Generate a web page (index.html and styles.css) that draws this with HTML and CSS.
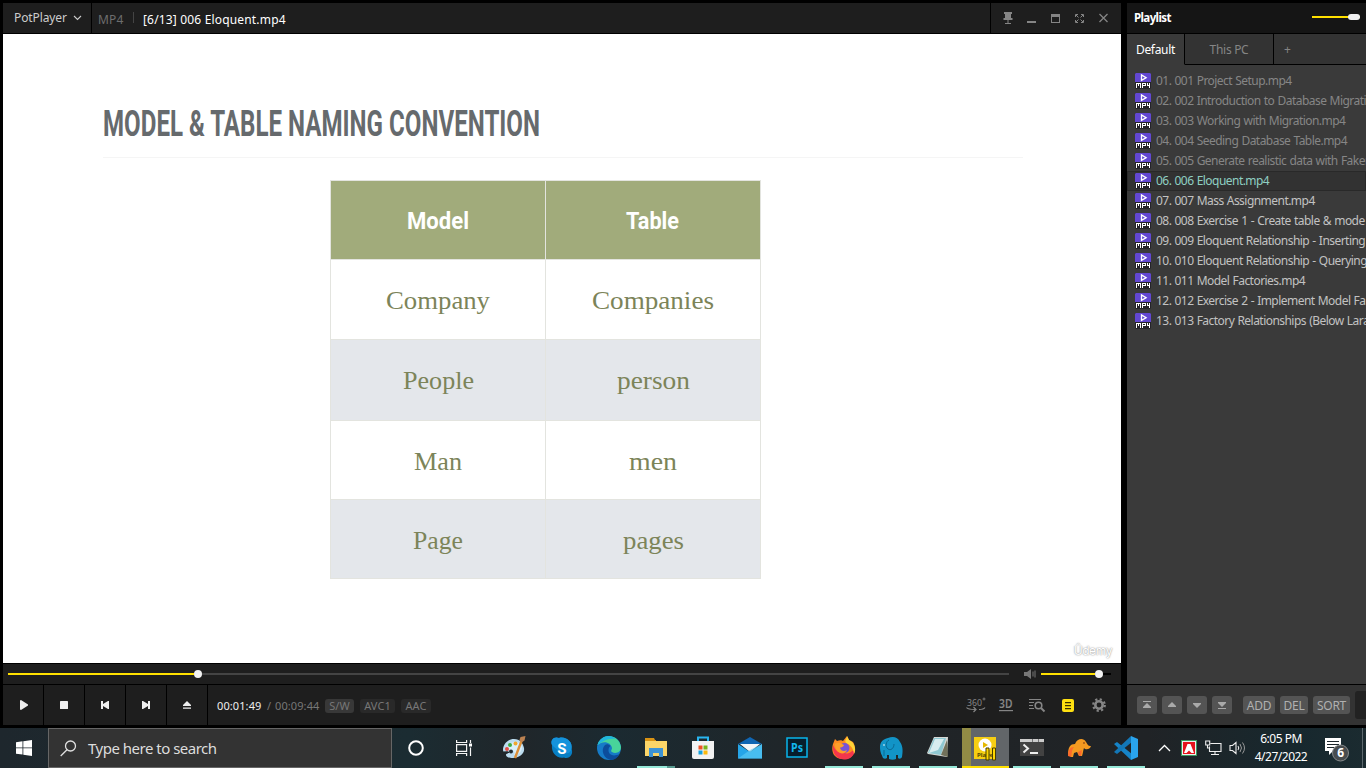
FILE: index.html
```html
<!DOCTYPE html>
<html lang="en">
<head>
<meta charset="utf-8">
<title>PotPlayer</title>
<link rel="stylesheet" href="styles.css">
</head>
<body>
<svg class="defs" width="0" height="0">
  <symbol id="mp4" viewBox="0 0 16 16">
    <path fill="#6247d2" d="M1 0h14l1 1v8H0V1z"/>
    <path fill="#242329" d="M0 9h16v6l-1 1H1l-1-1z"/>
    <path fill="none" stroke="#fff" stroke-width="1.3" d="M6.500 2v5.400l4.600-2.700z"/>
    <path fill="#fff" d="M1 10h4v1H1zM1 10h1v5H1zM3 10h1v3H3zM5 10h1v5H5zM7 10h3v1H7zM7 10h1v5H7zM10 10h1v3h-1zM8 12h2v1H8zM12 10h1v3h-1zM12 12h3v1h-3zM14 10h1v5h-1z"/>
  </symbol>
</svg>
<div class="workspace">
  <main class="player">
    <header class="titlebar">
      <div class="brand"><span>PotPlayer</span><svg width="9" height="6" viewBox="0 0 9 6"><path d="M1 1l3.500 3.500L8 1" fill="none" stroke="#ccc" stroke-width="1.100"/></svg></div>
      <div class="caption"><span class="fmt">MP4</span><i></i><span class="file">[6/13] 006 Eloquent.mp4</span></div>
      <div class="winbtns">
        <svg width="10" height="12" viewBox="0 0 10 12"><path fill="#858585" d="M1 0h8v2H8v4h1.500v2H.5V6H2V2H1zM4.500 8h1v3h-1zM2 11h6v1H2z"/></svg>
        <svg width="10" height="12" viewBox="0 0 10 12"><path fill="#858585" d="M0 9h9v2H0z"/></svg>
        <svg width="10" height="12" viewBox="0 0 10 12"><path fill="#858585" fill-rule="evenodd" d="M0 2h9v9H0zM1 5v5h7V5z"/></svg>
        <svg width="10" height="12" viewBox="0 0 10 12"><path fill="none" stroke="#858585" d="M.5 5V2.500H3M6 2.500h2.500V5M8.500 8v2.500H6M3 10.500H.5V8M1 3l2.500 2.500M8 3L5.500 5.500M8 10L5.500 7.500M1 10l2.500-2.500"/></svg>
        <svg width="10" height="12" viewBox="0 0 10 12"><path fill="none" stroke="#858585" stroke-width="1.300" d="M.5 2l8 8M8.500 2l-8 8"/></svg>
      </div>
    </header>
    <section class="slide">
      <svg class="heading" width="920" height="56"><text x="0" y="34" textLength="437" lengthAdjust="spacingAndGlyphs">MODEL &amp; TABLE NAMING CONVENTION</text></svg>
      <div class="grid">
        <div class="th"><svg width="214" height="78"><text x="76" y="48" textLength="62" lengthAdjust="spacingAndGlyphs">Model</text></svg></div>
        <div class="th"><svg width="214" height="78"><text x="80" y="48" textLength="53" lengthAdjust="spacingAndGlyphs">Table</text></svg></div>
        <div><svg width="214" height="78"><text x="55" y="49" textLength="104" lengthAdjust="spacingAndGlyphs">Company</text></svg></div>
        <div><svg width="214" height="78"><text x="46" y="49" textLength="122" lengthAdjust="spacingAndGlyphs">Companies</text></svg></div>
        <div class="alt"><svg width="214" height="78"><text x="72" y="49" textLength="71" lengthAdjust="spacingAndGlyphs">People</text></svg></div>
        <div class="alt"><svg width="214" height="78"><text x="71" y="49" textLength="73" lengthAdjust="spacingAndGlyphs">person</text></svg></div>
        <div><svg width="214" height="78"><text x="83" y="49" textLength="48" lengthAdjust="spacingAndGlyphs">Man</text></svg></div>
        <div><svg width="214" height="78"><text x="83" y="49" textLength="48" lengthAdjust="spacingAndGlyphs">men</text></svg></div>
        <div class="alt"><svg width="214" height="78"><text x="82" y="49" textLength="50" lengthAdjust="spacingAndGlyphs">Page</text></svg></div>
        <div class="alt"><svg width="214" height="78"><text x="77" y="49" textLength="61" lengthAdjust="spacingAndGlyphs">pages</text></svg></div>
      </div>
      <span class="mark">Ûdemy</span>
    </section>
    <div class="seek">
      <div class="track"><div class="done"></div><b></b></div>
      <svg width="12" height="10" viewBox="0 0 12 10"><path fill="#777" d="M0 3h3l4-3v10L3 7H0zM8.500 2.500h1v5h-1zM10.500 1.500h1v7h-1z"/></svg>
      <div class="vol"><div></div><b></b></div>
    </div>
    <div class="controls">
      <button><svg class="play" width="10" height="12" viewBox="0 0 10 12"><path fill="#eee" d="M1 1.500L2 1l7 4.500v1L2 11l-1-.5z"/></svg></button>
      <button><svg width="10" height="12" viewBox="0 0 10 12"><rect x="1" y="2" width="8" height="8" rx=".6" fill="#eee"/></svg></button>
      <button><svg width="10" height="12" viewBox="0 0 10 12"><path fill="#eee" d="M1 2h2v3l5-3h1v8H8L3 7v3H1z"/></svg></button>
      <button><svg width="10" height="12" viewBox="0 0 10 12"><path fill="#eee" d="M9 2H7v3L2 2H1v8h1l5-3v3h2z"/></svg></button>
      <button><svg width="10" height="12" viewBox="0 0 10 12"><path fill="#eee" d="M5 2l4 4v1H1V6zM1 8.500h8v1.200H1z"/></svg></button>
      <div class="time"><span class="now">00:01:49</span><span class="sl">/</span><span class="total">00:09:44</span><em class="on">S/W</em><em class="c2">AVC1</em><em class="c3">AAC</em></div>
      <div class="tools">
        <svg width="20" height="16" viewBox="0 0 20 16"><text class="t360" x="1" y="8.500" textLength="15" lengthAdjust="spacingAndGlyphs">360</text><circle cx="18" cy="2" r="1" fill="none" stroke="#858585" stroke-width=".8"/><path fill="none" stroke="#858585" stroke-width="1.200" d="M.5 10.500c1 1.500 3 2 8.500 2M7.500 10l2.500 2.500L7.500 15M19 10.500c-1 1.500-3 2-6 2"/></svg>
        <svg width="14" height="16" viewBox="0 0 14 16"><text class="t3d" x="0" y="11" textLength="13.500" lengthAdjust="spacingAndGlyphs">3D</text><path fill="#858585" d="M0 13h14v1.200H0z"/></svg>
        <svg width="16" height="16" viewBox="0 0 16 16"><path fill="none" stroke="#858585" stroke-width="1.200" d="M0 2.500h12M0 5.500h5M0 8.500h4M0 11.500h5"/><circle cx="9.500" cy="8.500" r="3.300" fill="none" stroke="#858585" stroke-width="1.600"/><path stroke="#858585" stroke-width="2" d="M12 11l3.500 3.500"/></svg>
        <svg width="12" height="16" viewBox="0 0 12 16"><rect y="2" width="12" height="13" rx="2" fill="#ffe011"/><path fill="#3a3200" d="M3 5h6v1.200H3zM3 8h6v1.200H3zM3 11h6v1.200H3z"/></svg>
        <svg width="14" height="16" viewBox="0 0 14 16"><circle cx="7" cy="8" r="3.700" fill="none" stroke="#858585" stroke-width="2.600"/><circle cx="7" cy="8" r="5.800" fill="none" stroke="#858585" stroke-width="2.200" stroke-dasharray="2.200 2.355"/></svg>
      </div>
    </div>
  </main>
  <aside class="playlist">
    <header class="plhead"><span>Playlist</span><div class="opacity"><b></b></div></header>
    <nav class="tabs"><span class="active">Default</span><span class="pc">This PC</span><span class="add">+</span></nav>
    <ul>
      <li class="seen"><svg><use href="#mp4"/></svg>01. 001 Project Setup.mp4</li>
      <li class="seen"><svg><use href="#mp4"/></svg>02. 002 Introduction to Database Migrati</li>
      <li class="seen"><svg><use href="#mp4"/></svg>03. 003 Working with Migration.mp4</li>
      <li class="seen"><svg><use href="#mp4"/></svg>04. 004 Seeding Database Table.mp4</li>
      <li class="seen"><svg><use href="#mp4"/></svg>05. 005 Generate realistic data with Faker</li>
      <li class="current"><svg><use href="#mp4"/></svg>06. 006 Eloquent.mp4</li>
      <li><svg><use href="#mp4"/></svg>07. 007 Mass Assignment.mp4</li>
      <li><svg><use href="#mp4"/></svg>08. 008 Exercise 1 - Create table &amp; mode</li>
      <li><svg><use href="#mp4"/></svg>09. 009 Eloquent Relationship - Inserting</li>
      <li><svg><use href="#mp4"/></svg>10. 010 Eloquent Relationship - Querying</li>
      <li><svg><use href="#mp4"/></svg>11. 011 Model Factories.mp4</li>
      <li><svg><use href="#mp4"/></svg>12. 012 Exercise 2 - Implement Model Fa</li>
      <li><svg><use href="#mp4"/></svg>13. 013 Factory Relationships (Below Lara</li>
    </ul>
    <footer class="plfoot">
      <span class="ib"><svg width="8" height="8" viewBox="0 0 8 8"><path fill="#aaa" d="M0 0h8v1H0zM4 2l4 4v1H0V6z"/></svg></span>
      <span class="ib"><svg width="8" height="8" viewBox="0 0 8 8"><path fill="#aaa" d="M4 1l4 4v1H0V5z"/></svg></span>
      <span class="ib"><svg width="8" height="8" viewBox="0 0 8 8"><path fill="#aaa" d="M4 7l4-4V2H0v1z"/></svg></span>
      <span class="ib last"><svg width="8" height="8" viewBox="0 0 8 8"><path fill="#aaa" d="M0 7h8v1H0zM4 6l4-4V1H0v1z"/></svg></span>
      <span class="tb w32">ADD</span><span class="tb w28">DEL</span><span class="tb w37">SORT</span><span class="find"></span>
    </footer>
  </aside>
</div>
<footer class="taskbar">
  <div class="start"><svg width="16" height="16" viewBox="0 0 16 16"><path fill="#fff" d="M0 2.200L6.500 1.300v6.200H0zM7.300 1.200L16 0v7.500H7.300zM0 8.300h6.500v6.300L0 13.700zM7.300 8.300H16V16l-8.700-1.200z"/></svg></div>
  <div class="search"><svg width="17" height="17" viewBox="0 0 17 17"><circle cx="10.500" cy="6" r="5" fill="none" stroke="#e0e0e0" stroke-width="1.300"/><path stroke="#e0e0e0" stroke-width="1.300" d="M7 9.700L.7 16"/></svg><span>Type here to search</span></div>
  <div class="apps">
    <div class="wide"><svg width="16" height="16"><circle cx="8" cy="8" r="6.800" fill="none" stroke="#fff" stroke-width="2"/></svg></div>
    <div class="wide view"><svg width="17" height="16" viewBox="0 0 17 16"><path fill="none" stroke="#f4f4f4" stroke-width="1.200" d="M.6 0v2.500h10V0M.6 16v-2.500h10V16M.6 4.600h10v6.800H.6zM14.500 0v3M14.500 7.500V16"/><path fill="#fff" d="M13 3.500h3v3h-3z"/></svg></div>
    <div><svg class="paint" width="24" height="24" viewBox="0 0 24 24"><path fill="#bcdcef" d="M22 12c1 6-5 10-11 10-4 0-7-1-7-3s4-1 3-3-6 1-6-2C1 8 6 3 12 3c6 0 9 4 10 9z"/><path fill="#d9effa" d="M20 11c0 5-4 8-8 8 2-4-2-5-5-5-2 0-3-1-1-4 3-5 12-6 14 1z"/><circle cx="5" cy="13" r="2" fill="#e44b43"/><circle cx="8" cy="9" r="2" fill="#3daa43"/><circle cx="13.500" cy="7.500" r="2" fill="#f0a72d"/><circle cx="9" cy="15.500" r="2" fill="#222b30"/><path fill="none" stroke="#dc8f38" stroke-width="2.400" d="M13 22l6.500-17"/><path fill="#bc8252" d="M17.500 4l1-3 5-1-1 4.500-3 2z"/></svg></div>
    <div><svg width="24" height="24" viewBox="0 0 24 24"><path fill="#087fc4" d="M2 9C0 4 4 0 9 2c7-2 14 4 12.500 11C24 18 19 24 14 21.500 7 23 1 17 2 9z"/><path fill="#1593dc" d="M2 9C0 4 4 0 9 2c7-2 14 4 12.500 11C20 20 11 18 2 9z"/><text class="skype" x="7.300" y="17.500">S</text></svg></div>
    <div><svg width="26" height="26" viewBox="0 0 26 26"><circle cx="13" cy="13" r="12" fill="#167bc7"/><path fill="#48d49a" d="M1.500 10C5-2 23-2 25 12c0 6-6 7-9 5-2-1 0-2 0-4C15 7 7 5 1.500 10z"/><path fill="#20b7dc" d="M1.500 10C5 0 14-1 20 4 10 3 7 7 1.500 10z"/><path fill="#0c4d9b" d="M9 10c-5 5-1 14 6 15 4 0 7-3 8.500-6-6 3-11 1-11-4 0-3 2-4 2-4-2-2-4-2-5.500-1z"/></svg></div>
    <div class="run group"><svg width="22" height="22" viewBox="0 0 22 22"><path fill="#d99314" d="M0 1h9l1 2h1v2H0z"/><path fill="#fbd568" d="M0 4h22v15H0z"/><path fill="#3d93d4" d="M4 11h14v9h-4v-4H8v4H4z"/></svg></div>
    <div><svg width="24" height="24" viewBox="0 0 24 24"><path fill="none" stroke="#29b5f0" stroke-width="2" d="M7 6V1.500h10V6"/><path fill="#f2f2f2" d="M1 5h22v16q0 2-2 2H3q-2 0-2-2z"/><path fill="#ef5125" d="M7.500 9.500h4v4h-4z"/><path fill="#78b51d" d="M12.500 9.500h4v4h-4z"/><path fill="#14a2df" d="M7.500 14.500h4v4h-4z"/><path fill="#fbb90c" d="M12.500 14.500h4v4h-4z"/></svg></div>
    <div><svg width="24" height="24" viewBox="0 0 24 24"><path fill="#1066b3" d="M0 8l12-7 12 7z"/><path fill="#f2f6f8" d="M2 8h20l-10 8z"/><path fill="#25a5e8" d="M0 8l12 8 12-8v14.500H0z"/><path fill="#5bcaf5" d="M0 22.500l12-8.500 12-6v14.500z" opacity=".65"/></svg></div>
    <div><svg width="22" height="22" viewBox="0 0 22 22"><path fill="#071e2c" stroke="#08b5eb" stroke-width="1.500" d="M1 1h20v19H1z"/><text class="ps" x="5" y="15" textLength="12" lengthAdjust="spacingAndGlyphs">Ps</text></svg></div>
    <div class="run"><svg width="24" height="24" viewBox="0 0 24 24"><path fill="#ff8b20" d="M1 8l2-5 2 2c2-1 5-1 6 0l4-5 2 4 4 2c4 6 2 17-9 17S-1 15 1 8z"/><path fill="#f4364c" d="M1 9c3 7 7 9 11 7 5 5 9-4 11-1-2 7-7 8.500-11 8.500C4 23 0 17 1 9z"/><path fill="#ffd337" d="M15 0l2 4c5 2 8 9 5 14-1-7-4-9-8-11-2-3 1-4 1-7z"/><circle cx="12.500" cy="12" r="5" fill="#7853d7"/><path fill="#ff9f29" d="M3 8c4-3 7 0 9 1-1 3-4 2-4 3 1 3 4 4 7 2-2 6-12 4-12-6z"/></svg></div>
    <div class="run"><svg width="24" height="24" viewBox="0 0 24 24"><path fill="#1294c7" d="M1 11C1 6 4 3 9 2c5-2 10-1 12 4 3 4 3 9 2 15-1 2-3 2-4 1v-3h-2v4c-2 1-5 1-7 0v-4H8v3c-1 1-3 1-4 0-1-3-3-5-3-11z"/><path fill="none" stroke="#075e87" stroke-width=".8" d="M10 4c-3 1-4 7-1 9s6-1 6-5M5 14v6"/><circle cx="5" cy="9" r=".8" fill="#fff"/></svg></div>
    <div class="run"><svg width="24" height="24" viewBox="0 0 24 24"><path fill="#d5d8d5" d="M8 1h14l-1 20-19-3-1-1z"/><path fill="#8fc8d2" d="M8 2h12l-5 17-13-2z"/><path fill="#d7ecef" d="M9 3h9l-6 11-9 3z"/><path fill="#71715b" d="M15 19l6-15 1 17z"/></svg></div>
    <div class="pot"><svg width="24" height="26" viewBox="0 0 24 26"><path fill="#f6ce13" d="M1 2h22v22H1z"/><circle cx="12" cy="10" r="6.500" fill="#fff"/><path fill="#e5b900" d="M10 7l5 3-5 3z"/><text class="pottext" x="4" y="22">Player</text><path fill="#ffd600" stroke="#473d00" d="M13 13h3v12h-3zM19.500 13h3v12h-3z"/></svg></div>
    <div class="run"><svg width="24" height="22" viewBox="0 0 24 22"><path fill="#424242" d="M0 2h24v17H0z"/><path fill="#ccc" d="M0 2h24v3H0z"/><path fill="#777" d="M12 2h1v3h-1zM18 2h1v3h-1z"/><path fill="none" stroke="#eee" stroke-width="2" d="M3.500 7.500L8 11.500l-4.500 4M10 16h8"/></svg></div>
    <div class="run"><svg width="24" height="24" viewBox="0 0 24 24"><path fill="#f39a21" d="M1 20c0-9 2-12 7-12 2-5 8-7 11-2 2 3 2 4 5 4-1 4-6 4-7 2-1 3-1 5-2 8h-3l-2-4-3 1-1 4H4l-1-5z"/><path fill="#fc692c" d="M1 20c0-6 2-9 6-9-3 3-2 9-3 10zM11 16l4-2-1 6h-2z"/><circle cx="17" cy="7" r=".8" fill="#6d2b09"/></svg></div>
    <div class="run"><svg width="24" height="24" viewBox="0 0 24 24"><path fill="#1684c8" d="M0 8l3-2 15 12-1 6z"/><path fill="#1377b7" d="M0 16l3 2L18 6l-1-6z"/><path fill="#2aa4ed" d="M17 0l7 3v18l-7 3z"/></svg></div>
  </div>
  <div class="tray">
    <svg class="chev" width="13" height="8" viewBox="0 0 13 8"><path fill="none" stroke="#fff" stroke-width="1.300" d="M1 7l5.500-5.500L12 7"/></svg>
    <svg class="avira" width="16" height="16" viewBox="0 0 16 16"><path fill="#3a9a60" d="M0 0h16v16H0z"/><path fill="#eee" d="M1 1h14v14H1z"/><path fill="#e5131b" d="M2 2h12v12H2z"/><path fill="#fff" d="M6.500 4h3L13 13h-2.500L8 10.500 5.500 13H3z"/></svg>
    <svg class="net" width="17" height="16" viewBox="0 0 17 16"><path fill="none" stroke="#eee" stroke-width="1.100" d="M5.500 3.500h10.500v8H4.500v-5M.7 1h4v4h-4zM2.500 5v3h2M10 11.500v3M6 14.500h8"/></svg>
    <svg width="17" height="14" viewBox="0 0 17 14"><path fill="none" stroke="#eee" stroke-width="1.100" d="M1 4.500h2.500L7 1.500v11L3.500 9.500H1zM9 5q1.500 2 0 4"/><path fill="none" stroke="#999" d="M11 3q3 4 0 8M13.500 1.500q4 5.500 0 11"/></svg>
    <div class="clock"><span>6:05 PM</span><span>4/27/2022</span></div>
    <svg class="note" width="26" height="24" viewBox="0 0 26 24"><path fill="#fff" d="M0 0h16v13H8l-4 4v-4H0z"/><path fill="#1d272c" d="M2 3h12v1H2zM2 6h12v1H2zM2 9h7v1H2z"/><circle cx="15.500" cy="15" r="8" fill="#484c4e" stroke="#868a8c"/><text class="badge" x="12.200" y="19.300">6</text></svg>
    <i class="edge"></i>
  </div>
</footer>
</body>
</html>
```
FILE: styles.css
```css
* { box-sizing: border-box; }
body { margin: 0; width: 1366px; height: 768px; overflow: hidden; background: #000; font: 12px "Noto Sans", sans-serif; }
svg { display: block; flex: none; overflow: visible; }
.defs { position: absolute; }
.workspace { display: flex; gap: 6px; padding: 3px 0 3px 3px; height: 728px; }
.player { width: 1118px; display: flex; flex-direction: column; gap: 1px; }
.titlebar { height: 30px; display: flex; gap: 1px; }
.titlebar > div { background: #1e1e1e; display: flex; align-items: center; }
.brand { width: 88px; padding: 0 0 1px 11px; gap: 6px; color: #ccc; letter-spacing: -.1px; }
.caption { width: 898px; padding: 3px 0 0 6px; color: #fff; white-space: nowrap; }
.fmt { width: 35px; color: #6d6d6d; letter-spacing: .2px; }
.caption i { width: 1px; height: 11px; background: #444; margin: -4px 9px 0 0; }
.file { letter-spacing: .17px; }
.winbtns { flex: 1; padding: 0 0 0 12px; gap: 14px; }
.slide { height: 629px; background: #fff; padding: 68px 0 0 100px; position: relative; }
.heading { border-bottom: 1px solid #f5f5f5; }
.heading text { font: 700 37.5px Roboto, sans-serif; fill: #666a6d; }
.grid { margin: 22px 0 0 227px; width: 431px; height: 399px; display: grid; grid-template-columns: 214px 214px; grid-template-rows: 78px 79px 80px 78px 78px; gap: 1px; border: 1px solid #e3e4df; background: #e3e4df; }
.grid div { background: #fff; overflow: hidden; }
.grid .th { background: #a1ab7b; }
.grid .alt { background: #e4e7eb; }
.grid text { font: 26px "Liberation Serif", serif; fill: #7c8459; }
.grid .th text { font: 700 24px Roboto, sans-serif; fill: #fff; }
.mark { position: absolute; right: 9px; bottom: 5px; font: 12px Inter, sans-serif; letter-spacing: -.4px; color: #fff; text-shadow: 0 0 2px #999, 0 0 1px #aaa; }
.seek { height: 20px; background: #1e1e1e; display: flex; align-items: center; padding-left: 5px; }
.track { width: 1001px; height: 2px; background: #444; display: flex; align-items: center; margin-right: 15px; }
.done { width: 186px; height: 2px; background: #ffe000; }
.seek b { width: 8px; height: 8px; border-radius: 4px; background: #f2f2f2; }
.vol { width: 70px; height: 2px; margin-left: 5px; background: #000; display: flex; align-items: center; }
.vol div { width: 54px; height: 2px; background: #ffe000; }
.controls { height: 40px; display: flex; gap: 1px; }
.controls button { width: 40px; padding: 0; border: 0; background: #1e1e1e; display: flex; align-items: center; justify-content: center; }
.play { margin-left: 2px; }
.time { width: 740px; background: #1e1e1e; display: flex; align-items: center; padding: 1px 0 0 9px; font-size: 11px; color: #777; white-space: nowrap; letter-spacing: .1px; }
.now { width: 50px; color: #eee; }
.sl { width: 8px; }
.total { width: 50px; }
.time em { font-style: normal; height: 14px; line-height: 14px; width: 29px; text-align: center; border-radius: 3px; background: #292929; }
.time .on { background: #383838; }
.time .c2 { width: 35px; margin: 0 6px; }
.time .c3 { width: 30px; }
.tools { flex: 1; margin-left: -1px; background: #1e1e1e; display: flex; align-items: center; padding-left: 18px; }
.tools svg { margin-right: 13px; }
.tools svg:nth-child(3) { margin-right: 17px; margin-left: 3px; }
.tools svg:nth-child(4) { margin-right: 18px; }
.tools svg:nth-child(5) { margin-right: 0; }
.t360 { font: 9px "Noto Sans", sans-serif; fill: #858585; }
.t3d { font: 600 12px "Noto Sans", sans-serif; fill: #858585; }
.playlist { flex: 1; display: flex; flex-direction: column; background: #3a3a3a; min-width: 0; }
.plhead { height: 30px; background: #151515; display: flex; justify-content: space-between; align-items: center; padding: 0 6px 2px 7px; color: #fff; font-weight: 700; font-size: 11.500px; letter-spacing: -.6px; }
.opacity { width: 48px; height: 2px; background: #ffe000; display: flex; align-items: center; justify-content: flex-end; }
.opacity b { width: 12px; height: 6px; border-radius: 3px; background: #f0f0f0; }
.tabs { display: flex; height: 32px; border-top: 1px solid #000; line-height: 31px; text-align: center; letter-spacing: -.3px; }
.tabs span { background: #333; color: #858585; border-bottom: 1px solid #000; border-right: 1px solid #000; }
.tabs .active { width: 58px; background: #3a3a3a; color: #fff; border-bottom-color: #3a3a3a; }
.tabs .pc { width: 89px; }
.tabs .add { flex: 1; text-align: left; padding-left: 10px; border-right: 0; }
.playlist ul { margin: 0; padding: 6px 0 0; list-style: none; height: 619px; }
.playlist li { height: 20px; display: flex; align-items: center; gap: 5px; padding: 0 0 1px 8px; color: #c2c2c2; white-space: nowrap; overflow: hidden; letter-spacing: -.54px; word-spacing: .6px; }
.playlist li svg { width: 16px; height: 16px; }
.playlist .seen { color: #868686; }
.playlist .current { color: #8fcfc2; background: #323232; box-shadow: inset 0 0 0 1px #292929; }
.plfoot { height: 41px; border-top: 1px solid #000; background: #333; display: flex; align-items: center; gap: 5px; padding-left: 10px; color: #b0b0b0; }
.plfoot span { height: 18px; border-radius: 3px; background: #545454; display: flex; align-items: center; justify-content: center; flex: none; line-height: 18px; letter-spacing: -.3px; }
.plfoot .tb { padding-top: 1px; }
.plfoot .ib { width: 20px; }
.plfoot .last { margin-right: 6px; }
.plfoot .w32 { width: 32px; }
.plfoot .w28 { width: 28px; }
.plfoot .w37 { width: 37px; }
.plfoot .find { width: 20px; height: 28px; background: #222; }
.taskbar { height: 40px; display: flex; background: linear-gradient(90deg, #1e272d 0, #1b2c32 30%, #20262a 38%, #1b2a31 45%, #202528 60%, #202326 84%, #17282e 95%, #1b2b30); color: #fff; }
.start { width: 48px; display: flex; align-items: center; justify-content: center; }
.search { width: 344px; background: #333; border: 1px solid #666; display: flex; align-items: center; padding-left: 11px; gap: 11px; font-size: 15px; color: #ddd; letter-spacing: -.5px; }
.apps { display: flex; width: 759px; }
.apps > div { width: 47px; flex: none; display: flex; align-items: center; justify-content: center; }
.apps .wide { width: 48px; }
.apps .view { margin-right: 3.600px; }
.paint { margin-right: 2px; }
.run { background: linear-gradient(#95e8d8, #95e8d8) center bottom / 38px 2px no-repeat; }
.group { background: linear-gradient(90deg, #95e8d8 30px, #57998f 30px) center bottom / 38px 2px no-repeat; }
.apps .pot { background: linear-gradient(#ffe100, #ffe100) bottom / 100% 2px no-repeat, linear-gradient(90deg, #918b45 9px, #626669 9px); }
.skype { font: 700 15px Roboto, sans-serif; fill: #fff; }
.ps { font: 700 12px "Noto Sans", sans-serif; fill: #12b7ee; }
.pottext { font: 700 6px "Noto Sans", sans-serif; fill: #574900; }
.tray { flex: 1; display: flex; align-items: center; padding-left: 7px; }
.avira { margin-left: 10px; }
.net { margin: 0 7px 0 8px; }
.clock { width: 62px; margin-left: 4px; display: flex; flex-direction: column; line-height: 18px; text-align: center; font-size: 12px; letter-spacing: -.5px; }
.note { margin: 4px 0 0 13px; }
.badge { font: 700 12px "Noto Sans", sans-serif; fill: #fff; }
.edge { width: 1px; height: 40px; background: #5c686d; margin-left: 11px; }
```
